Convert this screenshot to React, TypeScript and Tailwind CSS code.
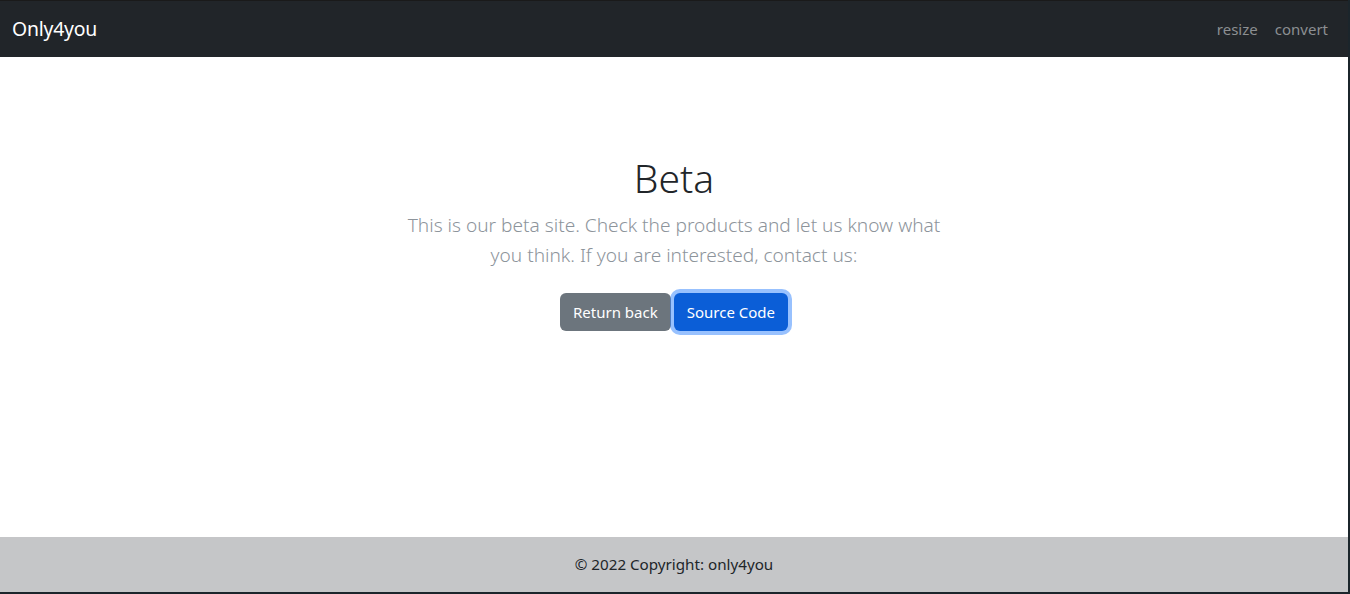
import React from 'react';

const sans = "font-['Noto_Sans',_'DejaVu_Sans',_sans-serif]";

export default function App() {
    return (
        <div className="w-[1350px] h-[594px] bg-[#1b252b] flex flex-col">
            <div className={`w-[1348px] h-[592px] flex flex-col ${sans}`}>
                <nav className="h-[57px] bg-[#212529] border-t border-[#1a1a1a] flex items-center justify-between pl-3 pr-5">
                    <a className="text-[19.4px] text-white leading-[30px] tracking-[-0.2px]">Only4you</a>
                    <div className="flex items-center gap-[17px] text-[15px] text-[#8c8f92]">
                        <a>resize</a>
                        <a>convert</a>
                    </div>
                </nav>

                <main className="flex-1 bg-white flex flex-col items-center pt-[97px]">
                    <h1 className="text-[39px] font-light leading-[48px] text-[#212529] mb-2">Beta</h1>
                    <p className="w-[560px] text-center text-[19.1px] font-light leading-[30px] text-[#8d949b] mb-[23px]">
                        This is our beta site. Check the products and let us know what you think. If you are interested, contact us:
                    </p>
                    <div className="flex items-center gap-[3px]">
                        <button className="h-[38px] px-[13px] rounded-[6px] bg-[#6c757d] text-white text-[15px]">Return back</button>
                        <button className="h-[38px] px-[13px] rounded-[6px] bg-[#0b5ed7] text-white text-[15px] ring-4 ring-[#3184fd]/50">Source Code</button>
                    </div>
                </main>

                <footer className="h-[55px] bg-[#c5c6c8] flex items-center justify-center text-[15.2px] text-[#212529]">
                    © 2022 Copyright: only4you
                </footer>
            </div>
        </div>
    );
}
